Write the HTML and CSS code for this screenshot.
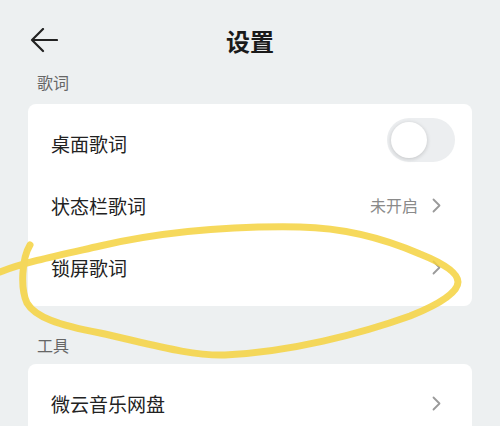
FILE: index.html
```html
<!DOCTYPE html>
<html>
  <head>
    <meta charset="UTF-8">
    <meta name="viewport" content="width=device-width, initial-scale=1.0">
    <title>设置</title>
    <link rel="stylesheet" href="styles.css">
  </head>
  <body>
    <div class="page">
      <div class="header">
        <svg class="back" width="28" height="26" viewBox="0 0 28 26">
          <path d="M13 1 L2 12 L13 23 M2 12 L27 12" fill="none" stroke="#222" stroke-width="2.2" stroke-linecap="round" stroke-linejoin="round"/>
        </svg>
        <h1>设置</h1>
      </div>

      <div class="section-label">歌词</div>
      <div class="card">
        <div class="row">
          <span class="row-title">桌面歌词</span>
          <div class="toggle"><div class="knob"></div></div>
        </div>
        <div class="row">
          <span class="row-title">状态栏歌词</span>
          <span class="row-value">未开启</span>
          <svg class="chevron" width="9" height="15" viewBox="0 0 9 15">
            <path d="M1.5 1.5 L7.5 7.5 L1.5 13.5" fill="none" stroke="#9a9a9a" stroke-width="1.8" stroke-linecap="round" stroke-linejoin="round"/>
          </svg>
        </div>
        <div class="row">
          <span class="row-title">锁屏歌词</span>
          <svg class="chevron" width="9" height="15" viewBox="0 0 9 15">
            <path d="M1.5 1.5 L7.5 7.5 L1.5 13.5" fill="none" stroke="#9a9a9a" stroke-width="1.8" stroke-linecap="round" stroke-linejoin="round"/>
          </svg>
        </div>
      </div>

      <div class="section-label tools">工具</div>
      <div class="card">
        <div class="row">
          <span class="row-title">微云音乐网盘</span>
          <svg class="chevron" width="9" height="15" viewBox="0 0 9 15">
            <path d="M1.5 1.5 L7.5 7.5 L1.5 13.5" fill="none" stroke="#9a9a9a" stroke-width="1.8" stroke-linecap="round" stroke-linejoin="round"/>
          </svg>
        </div>
      </div>

      <!-- highlighter mark drawn over the screenshot -->
      <svg class="marker" width="500" height="426" viewBox="0 0 500 426">
        <path d="M30 245 C22 258 20 288 27 303 C35 317 58 325 100 333 C150 344 190 356 225 355 C290 352 360 334 410 316 C440 304 458 292 458 282 C458 272 440 262 420 254 C390 241 350 228 300 227 C240 226 170 230 100 246 C60 255 25 262 0 272"
              fill="none" stroke="#f5d240" stroke-width="7" stroke-linecap="round" stroke-linejoin="round" opacity="0.85"/>
      </svg>
    </div>
  </body>
</html>
```

FILE: styles.css
```css
* {
  margin: 0;
  padding: 0;
  box-sizing: border-box;
}

body {
  font-family: "Noto Sans CJK SC", "Noto Sans", sans-serif;
  background: #edf0f1;
  color: #222;
  overflow: hidden;
}

.page {
  position: relative;
  width: 500px;
  height: 426px;
  padding-top: 16px;
}

.header {
  position: relative;
  height: 50px;
  display: flex;
  align-items: center;
  justify-content: center;
}

.back {
  position: absolute;
  left: 30px;
  top: 12px;
}

h1 {
  font-size: 24px;
  font-weight: 700;
  color: #1a1a1a;
  line-height: 50px;
}

.section-label {
  padding: 4px 0 0 37px;
  font-size: 16px;
  line-height: 24px;
  color: #666;
}

.section-label.tools {
  padding-top: 27px;
}

.card {
  margin: 10px 28px 0;
  padding: 8px 0;
  background: #fff;
  border-radius: 8px;
}

.section-label.tools + .card {
  margin-top: 7px;
}

.row {
  height: 62px;
  display: flex;
  align-items: center;
  padding: 0 17px 0 23px;
}

.row-title {
  flex: 1;
  font-size: 19px;
  color: #222;
}

.row-value {
  font-size: 16px;
  color: #8a8a8a;
  margin-right: 14px;
}

.chevron {
  margin-right: 14px;
}

.toggle {
  width: 68px;
  height: 44px;
  margin-bottom: 6px;
  border-radius: 22px;
  background: #eceef0;
  padding: 4px;
}

.knob {
  width: 36px;
  height: 36px;
  border-radius: 50%;
  background: #fff;
  box-shadow: 0 1px 4px rgba(0, 0, 0, 0.18);
}

.marker {
  position: absolute;
  left: 0;
  top: 0;
  pointer-events: none;
}
```
